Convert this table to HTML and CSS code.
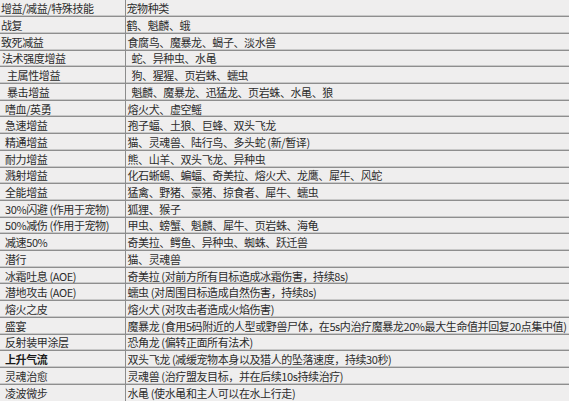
FILE: index.html
```html
<!DOCTYPE html>
<html lang="zh-CN">
<head>
<meta charset="utf-8">
<link rel="stylesheet" href="styles.css">
</head>
<body>
<table class="pets">
  <colgroup><col class="c1"><col class="c2"></colgroup>
  <tr><td class="l p1">增益/减益/特殊技能</td><td class="r p1">宠物种类</td></tr>
  <tr><td class="l p1">战复</td><td class="r p1">鹤、魁麟、蛾</td></tr>
  <tr><td class="l p1">致死减益</td><td class="r p2">食腐鸟、魔暴龙、蝎子、淡水兽</td></tr>
  <tr><td class="l p2">法术强度增益</td><td class="r p6">蛇、异种虫、水黾</td></tr>
  <tr><td class="l p7">主属性增益</td><td class="r p6">狗、猩猩、页岩蛛、蠕虫</td></tr>
  <tr><td class="l p7">暴击增益</td><td class="r p6">魁麟、魔暴龙、迅猛龙、页岩蛛、水黾、狼</td></tr>
  <tr><td class="l">嗜血/英勇</td><td class="r">熔火犬、虚空鳐</td></tr>
  <tr><td class="l">急速增益</td><td class="r">孢子蝠、土狼、巨蜂、双头飞龙</td></tr>
  <tr><td class="l">精通增益</td><td class="r">猫、灵魂兽、陆行鸟、多头蛇 (新/暂译)</td></tr>
  <tr><td class="l">耐力增益</td><td class="r">熊、山羊、双头飞龙、异种虫</td></tr>
  <tr><td class="l">溅射增益</td><td class="r">化石蜥蜴、蝙蝠、奇美拉、熔火犬、龙鹰、犀牛、风蛇</td></tr>
  <tr><td class="l">全能增益</td><td class="r">猛禽、野猪、豪猪、掠食者、犀牛、蠕虫</td></tr>
  <tr><td class="l">30%闪避 (作用于宠物)</td><td class="r">狐狸、猴子</td></tr>
  <tr><td class="l">50%减伤 (作用于宠物)</td><td class="r">甲虫、螃蟹、魁麟、犀牛、页岩蛛、海龟</td></tr>
  <tr><td class="l">减速50%</td><td class="r">奇美拉、鳄鱼、异种虫、蜘蛛、跃迁兽</td></tr>
  <tr><td class="l">潜行</td><td class="r">猫、灵魂兽</td></tr>
  <tr><td class="l">冰霜吐息 (AOE)</td><td class="r">奇美拉 (对前方所有目标造成冰霜伤害，持续8s)</td></tr>
  <tr><td class="l">潜地攻击 (AOE)</td><td class="r">蠕虫 (对周围目标造成自然伤害，持续8s)</td></tr>
  <tr><td class="l">熔火之皮</td><td class="r">熔火犬 (对攻击者造成火焰伤害)</td></tr>
  <tr><td class="l">盛宴</td><td class="r">魔暴龙 (食用5码附近的人型或野兽尸体，在5s内治疗魔暴龙20%最大生命值并回复20点集中值)</td></tr>
  <tr><td class="l">反射装甲涂层</td><td class="r">恐角龙 (偏转正面所有法术)</td></tr>
  <tr><td class="l strong">上升气流</td><td class="r">双头飞龙 (减缓宠物本身以及猎人的坠落速度，持续30秒)</td></tr>
  <tr><td class="l">灵魂治愈</td><td class="r">灵魂兽 (治疗盟友目标，并在后续10s持续治疗)</td></tr>
  <tr class="last"><td class="l">凌波微步</td><td class="r">水黾 (使水黾和主人可以在水上行走)</td></tr>
</table>
</body>
</html>
```
FILE: styles.css
```css
html, body {
  margin: 0;
  padding: 0;
  background: #efeeee;
}
.pets {
  width: 569px;
  height: 401px;
  border-collapse: collapse;
  table-layout: fixed;
  font-family: "Noto Sans CJK SC", "DejaVu Sans", sans-serif;
  font-size: 11px;
  letter-spacing: -0.4px;
  color: #2c2c2c;
  background: #efeeee;
}
.c1 { width: 125px; }
.pets tr { height: 16.7px; }
.pets td {
  padding: 0 0 0 5px;
  white-space: nowrap;
  overflow: hidden;
  line-height: 14px;
  vertical-align: middle;
  border-bottom: 1px solid #8e8e8e;
  box-shadow: inset 0 -1px 0 #c8c8c8;
}
.pets tr.last td {
  border-bottom: none;
  box-shadow: none;
}
.pets td.l {
  border-right: 1px solid #8c8c8c;
}
.pets td.r { padding-left: 2px; }
.pets td.p1 { padding-left: 1px; }
.pets td.p2 { padding-left: 2px; }
.pets td.p6 { padding-left: 6px; }
.pets td.p7 { padding-left: 7px; }
.pets td.strong {
  font-weight: 700;
  color: #1a1a1a;
}
```
